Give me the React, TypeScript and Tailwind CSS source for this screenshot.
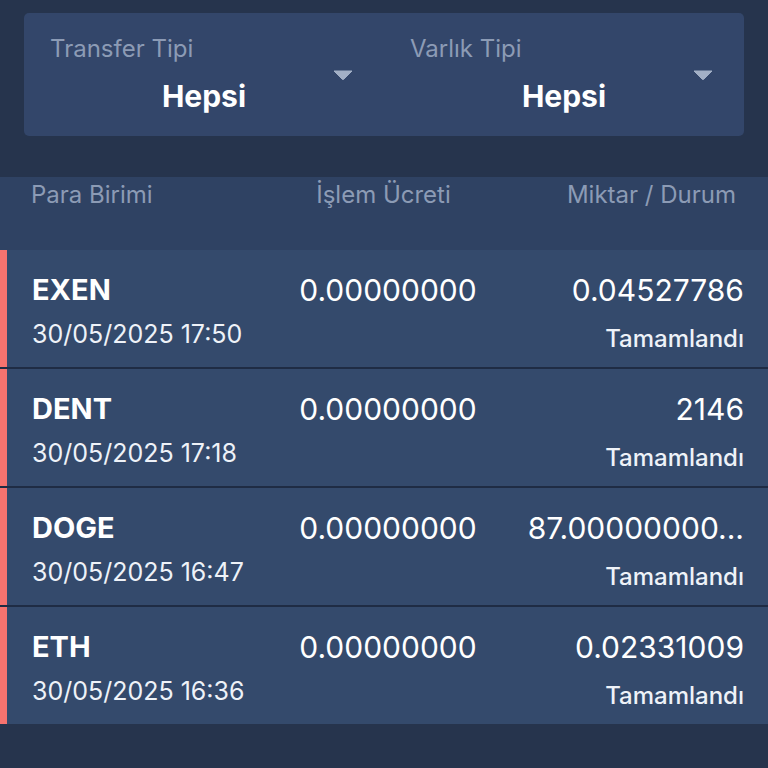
import React from "react";

const rows = [
  { sym: "EXEN", date: "30/05/2025 17:50", fee: "0.00000000", amount: "0.04527786" },
  { sym: "DENT", date: "30/05/2025 17:18", fee: "0.00000000", amount: "2146" },
  { sym: "DOGE", date: "30/05/2025 16:47", fee: "0.00000000", amount: "87.00000000..." },
  { sym: "ETH", date: "30/05/2025 16:36", fee: "0.00000000", amount: "0.02331009" },
];

function Caret() {
  return (
    <svg width="20" height="10" viewBox="0 0 20 10" className="absolute right-[31px] top-[57px]">
      <path d="M1 1 H19 L10.8 9.2 Q10 10 9.2 9.2 Z" fill="#a3b0c6" stroke="#a3b0c6" strokeWidth="1" strokeLinejoin="round" />
    </svg>
  );
}

function Filter({ label }: { label: string }) {
  return (
    <div className="relative flex-1 flex flex-col pt-[22px]">
      <div className="pl-[26px] text-[24px] leading-[28px] text-[#8c9bb5]">{label}</div>
      <div className="mt-[16px] text-center text-[30px] leading-[34px] font-bold text-white">Hepsi</div>
      <Caret />
    </div>
  );
}

export default function App() {
  return (
    <div
      className="w-full h-[768px] bg-[#26344d] overflow-hidden"
      style={{ fontFamily: "Inter, 'Noto Sans', sans-serif" }}
    >
      <div className="px-[24px] pt-[13px]">
        <div className="h-[123px] rounded-[5px] bg-[#33466a] flex">
          <Filter label="Transfer Tipi" />
          <Filter label="Varlık Tipi" />
        </div>
      </div>

      <div className="mt-[41px] h-[73px] bg-[#2f4263] grid grid-cols-3 pl-[31px] pr-[32px] pt-[3px] text-[24px] leading-[30px] text-[#8c9bb5]">
        <div>Para Birimi</div>
        <div className="text-center">İşlem Ücreti</div>
        <div className="text-right">Miktar / Durum</div>
      </div>

      <div className="flex flex-col gap-[2px] bg-[#1f2c44]">
        {rows.map((r) => (
          <div key={r.sym} className="h-[117px] flex bg-[#344a6c]">
            <div className="w-[7px] bg-[#f7736f]" />
            <div className="flex-1 grid grid-cols-3 pl-[25px] pr-[24px] pt-[22px] text-white">
              <div className="flex flex-col">
                <div className="text-[29px] leading-[36px] font-bold">{r.sym}</div>
                <div className="mt-[11px] text-[25px] leading-[30px] text-[#eef2f8] whitespace-nowrap">{r.date}</div>
              </div>
              <div className="text-center text-[30px] leading-[36px] whitespace-nowrap">{r.fee}</div>
              <div className="flex flex-col items-end">
                <div className="text-[30px] leading-[36px] whitespace-nowrap">{r.amount}</div>
                <div className="mt-[17px] text-[24px] leading-[28px] font-medium text-[#eef2f8]">Tamamlandı</div>
              </div>
            </div>
          </div>
        ))}
      </div>
    </div>
  );
}
